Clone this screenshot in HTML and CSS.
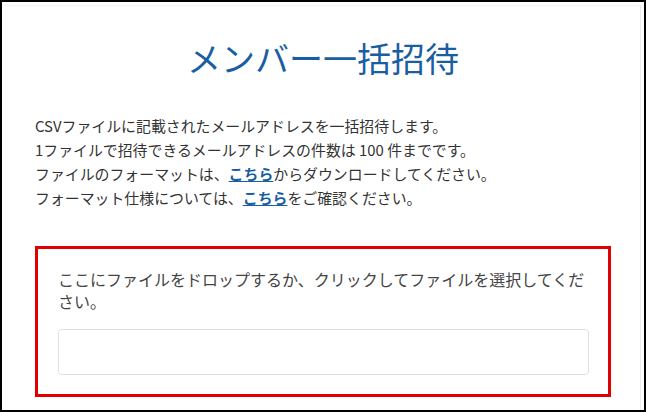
FILE: index.html
```html
<!DOCTYPE html>
<html lang="ja">
<head>
    <meta charset="UTF-8">
    <meta name="viewport" content="width=device-width, initial-scale=1.0">
    <title>メンバー一括招待</title>
    <link rel="stylesheet" href="styles.css">
</head>
<body>
    <div class="frame">
        <div class="card">
            <h1 class="page-title">メンバー一括招待</h1>

            <p class="intro">
                CSVファイルに記載されたメールアドレスを一括招待します。<br>
                1ファイルで招待できるメールアドレスの件数は 100 件までです。<br>
                ファイルのフォーマットは、<a href="#">こちら</a>からダウンロードしてください。<br>
                フォーマット仕様については、<a href="#">こちら</a>をご確認ください。
            </p>

            <div class="dropzone">
                <p class="dropzone-text">ここにファイルをドロップするか、クリックしてファイルを選択してください。</p>
                <div class="file-box"></div>
            </div>
        </div>
    </div>
</body>
</html>
```

FILE: styles.css
```css
html, body, h1, p {
    margin: 0;
    padding: 0;
}

body {
    font-family: "Noto Sans CJK JP", sans-serif;
    background: #fff;
    color: #333;
}

.frame {
    box-sizing: border-box;
    width: 646px;
    height: 412px;
    border: 2px solid #000;
    overflow: hidden;
    padding: 3px 3px 0 2px;
}

.card {
    border-top: 1px solid #f3f3f3;
    border-right: 1px solid #ececec;
    height: 100%;
    padding: 0 29px 0 31px;
}

.page-title {
    margin-top: 32px;
    font-size: 34px;
    line-height: 40px;
    font-weight: normal;
    color: #1a5ea2;
    text-align: center;
}

.intro {
    margin-top: 36px;
    font-size: 14.9px;
    line-height: 24px;
    color: #333;
}

.intro a {
    color: #1a5ea2;
    font-weight: bold;
    text-decoration: underline;
}

.dropzone {
    margin-top: 36px;
    border: 3px solid #e00000;
    padding: 19px 19px 19px 20px;
}

.dropzone-text {
    font-size: 16px;
    line-height: 22px;
    color: #444;
}

.file-box {
    margin-top: 17px;
    height: 44px;
    border: 1px solid #e2e2e2;
    border-radius: 4px;
}
```
